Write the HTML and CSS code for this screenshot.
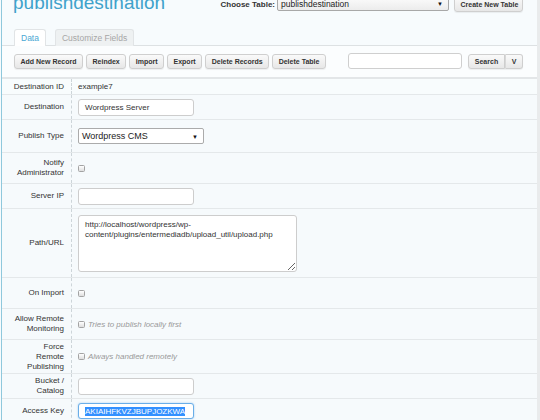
FILE: index.html
```html
<!DOCTYPE html>
<html>
<head>
<meta charset="utf-8">
<link rel="stylesheet" href="styles.css">
</head>
<body>
<div class="page">
  <div class="main">
    <header class="top">
      <h1 class="title">publishdestination</h1>
      <div class="chooser">
        <span class="chooser-label">Choose Table:</span>
        <div class="table-select">publishdestination<span class="arrow">&#9660;</span></div>
        <button class="btn btn-create">Create New Table</button>
      </div>
    </header>
    <nav class="tabs">
      <span class="tab tab-active">Data</span>
      <span class="tab">Customize Fields</span>
    </nav>
    <div class="toolbar">
      <button class="btn">Add New Record</button>
      <button class="btn">Reindex</button>
      <button class="btn">Import</button>
      <button class="btn">Export</button>
      <button class="btn">Delete Records</button>
      <button class="btn">Delete Table</button>
      <input class="search-input" type="text">
      <div class="btn-group">
        <button class="btn btn-left">Search</button>
        <button class="btn btn-right">V</button>
      </div>
    </div>
    <div class="form">
      <div class="row row-15 row-first"><div class="label">Destination ID</div><div class="value">example7</div></div>
      <div class="row row-24"><div class="label">Destination</div><div class="value"><div class="field">Wordpress Server</div></div></div>
      <div class="row row-32"><div class="label">Publish Type</div><div class="value"><div class="select">Wordpress CMS<span class="arrow">&#9660;</span></div></div></div>
      <div class="row row-30"><div class="label">Notify<br>Administrator</div><div class="value"><span class="check"></span></div></div>
      <div class="row row-24"><div class="label">Server IP</div><div class="value"><div class="field"></div></div></div>
      <div class="row row-68"><div class="label">Path/URL</div><div class="value"><textarea class="area">http://localhost/wordpress/wp-content/plugins/entermediadb/upload_util/upload.php</textarea></div></div>
      <div class="row row-30"><div class="label">On Import</div><div class="value"><span class="check"></span></div></div>
      <div class="row row-30"><div class="label">Allow Remote<br>Monitoring</div><div class="value"><span class="check"></span><span class="hint">Tries to publish locally first</span></div></div>
      <div class="row row-33"><div class="label">Force<br>Remote<br>Publishing</div><div class="value"><span class="check"></span><span class="hint">Always handled remotely</span></div></div>
      <div class="row row-24"><div class="label">Bucket /<br>Catalog</div><div class="value"><div class="field"></div></div></div>
      <div class="row row-24"><div class="label">Access Key</div><div class="value"><div class="field field-focus"><span class="selected">AKIAIHFKVZJBUPJOZKWA</span></div></div></div>
    </div>
  </div>
  <div class="strip"></div>
</div>
</body>
</html>
```

FILE: styles.css
```css
* { box-sizing: border-box; }
html, body { margin: 0; padding: 0; }
body {
  font-family: "Liberation Sans", Arial, sans-serif;
  background: #f7fbfd;
  color: #333;
}
.page {
  display: flex;
  width: 540px;
  height: 420px;
  overflow: hidden;
}
.main {
  flex: 1;
  margin-left: 1px;
  border-left: 1px solid #8fc8dc;
  background: #f7fbfd;
  min-width: 0;
}
.strip {
  width: 3px;
  background: #e9ebec;
}
.top {
  display: flex;
  justify-content: space-between;
  align-items: flex-start;
  height: 29px;
  padding: 0 14px 0 11px;
}
.title {
  margin: -7px 0 0 0;
  font-size: 19px;
  line-height: 19px;
  font-weight: normal;
  color: #3fa2cb;
}
.chooser {
  display: flex;
  align-items: center;
  margin-top: -4px;
}
.chooser-label {
  font-size: 8px;
  font-weight: bold;
  color: #333;
  margin-right: 2px;
}
.table-select {
  position: relative;
  width: 172px;
  height: 14px;
  border: 1px solid #a8a8a8;
  border-radius: 2px;
  background: linear-gradient(#fbfbfb, #ececec);
  font-size: 8.5px;
  line-height: 12px;
  padding-left: 3px;
  color: #222;
}
.arrow {
  position: absolute;
  right: 5px;
  top: 0;
  font-size: 6px;
  color: #111;
}
.btn {
  font-family: "Liberation Sans", Arial, sans-serif;
  font-size: 7px;
  font-weight: bold;
  color: #333;
  height: 15px;
  padding: 0 5.5px;
  border: 1px solid #cfcfcf;
  border-radius: 3px;
  background: linear-gradient(#fafafa, #e7e7e7);
  box-shadow: 0 1px 1px rgba(0,0,0,0.06);
  cursor: pointer;
  white-space: nowrap;
}
.btn-create {
  margin-left: 5px;
  height: 16px;
  width: 69px;
}
.tabs {
  display: flex;
  gap: 9px;
  padding-left: 12px;
  height: 17px;
  border-bottom: 1px solid #dde1e3;
}
.tab {
  height: 17px;
  font-size: 8.5px;
  line-height: 16px;
  padding: 0 6px;
  border: 1px solid #e1e4e6;
  border-bottom: none;
  border-radius: 3px 3px 0 0;
  background: #eef1f2;
  color: #a6a6a6;
}
.tab-active {
  background: #ffffff;
  color: #4aa8d3;
  height: 17px;
  position: relative;
  margin-bottom: -1px;
}
.toolbar {
  display: flex;
  align-items: center;
  gap: 3px;
  padding: 7px 14px 8px 12px;
  background: #fbfdfe;
  border-bottom: 2px solid #e3e6e8;
}
.search-input {
  margin-left: auto;
  width: 114px;
  height: 16px;
  border: 1px solid #cfcfcf;
  border-radius: 3px;
  background: #fff;
  margin-right: 3px;
}
.btn-group {
  display: flex;
}
.btn-left {
  border-radius: 3px 0 0 3px;
  width: 37px;
  padding: 0;
}
.btn-right {
  border-radius: 0 3px 3px 0;
  border-left: 1px solid #d8d8d8;
  width: 18px;
  padding: 0;
}
.row {
  display: grid;
  grid-template-columns: 70px 1fr;
  border-bottom: 1px solid #e4e8ea;
  background: #f6fafc;
}
.row-first { background: #f8fcfd; }
.row-15 { height: 16px; }
.row-24 { height: 25px; }
.row-30 { height: 31px; }
.row-32 { height: 33px; }
.row-33 { height: 34px; }
.row-68 { height: 69px; }
.label {
  display: flex;
  align-items: center;
  justify-content: flex-end;
  text-align: right;
  font-size: 8px;
  line-height: 10px;
  color: #333;
  padding-right: 7px;
  border-right: 1px dashed #cdd5d9;
}
.value {
  display: flex;
  align-items: center;
  padding-left: 6px;
  font-size: 8px;
  color: #333;
}
.field {
  width: 116px;
  height: 17px;
  border: 1px solid #cdcdcd;
  border-radius: 3px;
  background: #fff;
  font-size: 8px;
  line-height: 15px;
  padding-left: 6px;
  color: #333;
}
.field-focus {
  border-color: #6aaee8;
  box-shadow: 0 0 2px rgba(102,175,233,0.6);
  height: 16px;
}
.selected {
  background: #3390ff;
  color: #fff;
}
.select {
  position: relative;
  width: 126px;
  height: 16px;
  border: 1px solid #ababab;
  border-radius: 2px;
  background: #fff;
  font-size: 9px;
  line-height: 14px;
  padding-left: 3px;
  color: #222;
}
.select .arrow { right: 5px; top: 1px; }
.check {
  display: inline-block;
  width: 7px;
  height: 7px;
  border: 1px solid #a3a3a3;
  border-radius: 1.5px;
  background: linear-gradient(#ffffff, #dedede);
}
.hint {
  font-style: italic;
  font-size: 8px;
  color: #999;
  margin-left: 3px;
}
.area {
  width: 219px;
  height: 57px;
  border: 1px solid #cdcdcd;
  border-radius: 3px;
  background: #fff;
  font-family: "Liberation Sans", Arial, sans-serif;
  font-size: 8px;
  line-height: 10px;
  padding: 4px 6px;
  color: #333;
  margin: 0;
}
```
